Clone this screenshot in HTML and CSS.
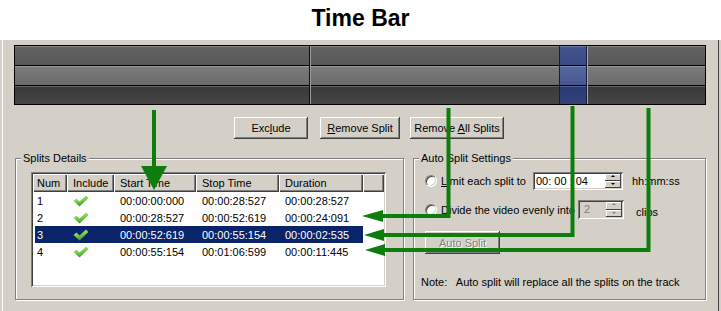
FILE: index.html
```html
<!DOCTYPE html>
<html>
<head>
<meta charset="utf-8">
<title>Time Bar</title>
<link rel="stylesheet" href="styles.css">
</head>
<body>
<div class="title">Time Bar</div>
<div class="dialog">
    <div class="timebar">
        <div class="seg seg-a"><div class="r1"></div><div class="r2"></div><div class="r3"></div></div>
        <div class="seg seg-b"><div class="r1"></div><div class="r2"></div><div class="r3"></div></div>
        <div class="seg seg-sel"><div class="r1"></div><div class="r2"></div><div class="r3"></div></div>
        <div class="seg seg-c"><div class="r1"></div><div class="r2"></div><div class="r3"></div></div>
    </div>
    <div class="actions">
        <button class="btn btn-exclude">Exc<u>l</u>ude</button>
        <button class="btn btn-remove"><u>R</u>emove Split</button>
        <button class="btn btn-removeall">Remove <u>A</u>ll Splits</button>
    </div>
    <div class="groups">
        <fieldset class="group splits">
            <legend>Splits Details</legend>
            <div class="listview">
                <table class="grid">
                    <colgroup><col style="width:34px"><col style="width:47px"><col style="width:82px"><col style="width:83px"><col style="width:84px"><col style="width:21px"></colgroup>
                    <tr><th class="c-num">Num</th><th>Include</th><th>Start Time</th><th>Stop Time</th><th>Duration</th><th></th></tr>
                    <tr><td class="c-num">1</td><td><svg class="chk" width="16" height="12" viewBox="0 0 16 12"><defs><linearGradient id="chkfill" x1="0" y1="0" x2="0.4" y2="1"><stop offset="0" stop-color="#c4f59c"/><stop offset="0.5" stop-color="#7ed456"/><stop offset="1" stop-color="#3e9b1f"/></linearGradient></defs><polygon points="0.5,6 3.5,3.5 6.5,6.5 13,0.5 15.5,3 6.5,11.5" fill="url(#chkfill)"/></svg></td><td>00:00:00:000</td><td>00:00:28:527</td><td>00:00:28:527</td><td></td></tr>
                    <tr><td class="c-num">2</td><td><svg class="chk" width="16" height="12" viewBox="0 0 16 12"><polygon points="0.5,6 3.5,3.5 6.5,6.5 13,0.5 15.5,3 6.5,11.5" fill="url(#chkfill)"/></svg></td><td>00:00:28:527</td><td>00:00:52:619</td><td>00:00:24:091</td><td></td></tr>
                    <tr class="sel"><td class="c-num">3</td><td><svg class="chk" width="16" height="12" viewBox="0 0 16 12"><polygon points="0.5,6 3.5,3.5 6.5,6.5 13,0.5 15.5,3 6.5,11.5" fill="url(#chkfill)"/></svg></td><td>00:00:52:619</td><td>00:00:55:154</td><td>00:00:02:535</td><td class="filler"></td></tr>
                    <tr><td class="c-num">4</td><td><svg class="chk" width="16" height="12" viewBox="0 0 16 12"><polygon points="0.5,6 3.5,3.5 6.5,6.5 13,0.5 15.5,3 6.5,11.5" fill="url(#chkfill)"/></svg></td><td>00:00:55:154</td><td>00:01:06:599</td><td>00:00:11:445</td><td></td></tr>
                </table>
            </div>
        </fieldset>
        <fieldset class="group auto">
            <legend>Auto Split Settings</legend>
            <div class="opt opt-limit">
                <span class="radio"></span>
                <span class="opt-label"><u>L</u>imit each split to</span>
                <div class="spin spin-time"><span class="spin-val">00: 00 : 04</span><span class="spin-btns"><span class="sb up"></span><span class="sb down"></span></span></div>
                <span class="unit">hh:mm:ss</span>
            </div>
            <div class="opt opt-divide">
                <span class="radio"></span>
                <span class="opt-label"><u>D</u>ivide the video evenly into</span>
                <div class="spin spin-clips off"><span class="spin-val">2</span><span class="spin-btns"><span class="sb up"></span><span class="sb down"></span></span></div>
                <span class="unit unit-clips">clips</span>
            </div>
            <button class="btn btn-auto" disabled><u>A</u>uto Split</button>
            <div class="note">Note:&nbsp;&nbsp; Auto split will replace all the splits on the track</div>
        </fieldset>
    </div>
</div>
<svg class="arrows" width="721" height="311" viewBox="0 0 721 311">
    <g fill="none" stroke="#0d7d0d" stroke-width="4">
        <path d="M154 110V168"/>
        <path d="M448.5 108V216H380"/>
        <path d="M572.5 106V235H380"/>
        <path d="M648.5 108V250H380"/>
    </g>
    <g fill="#0d7d0d">
        <polygon points="141,166 167,166 154,190"/>
        <polygon points="362,216 383,210 383,222"/>
        <polygon points="364,235 384,229 384,241"/>
        <polygon points="365,250 385,244 385,256"/>
    </g>
</svg>
</body>
</html>
```
FILE: styles.css
```css
* {box-sizing:border-box;}
body {margin:0; width:721px; height:311px; position:relative; overflow:hidden; background:#fff; color:#000; font-family:"Liberation Sans", Arial, sans-serif; font-size:11px;}
u {text-decoration:underline; text-underline-offset:1px;}

.title {height:40px; line-height:37px; text-align:center; font-size:23px; font-weight:bold;}

.dialog {height:271px; padding:5px 15px 0 14px; background:#d4d0c8;
    box-shadow: inset 2px 0 #d4d0c8, inset -2px 0 #d4d0c8, inset 3px 0 #fff, inset -3px 0 #404040;}

/* time bar */
.timebar {display:flex; height:60px; border:1px solid #000;}
.seg {display:flex; flex-direction:column;}
.seg div {border-bottom:1px solid #000; box-shadow:inset 0 1px rgba(255,255,255,.22);}
.seg .r1 {height:20px; background:linear-gradient(#626262, #575757);}
.seg .r2 {height:20px; background:linear-gradient(#7c7c7c, #6a6a6a);}
.seg .r3 {height:18px; border-bottom:none; background:linear-gradient(#383838, #464646);}
.seg-a {flex:0 0 295px; border-right:1px solid #111;}
.seg-b {flex:0 0 249px; border-left:1px solid #9a9a9a;}
.seg-sel {flex:0 0 28px; border-left:1px solid #141c40; border-right:1px solid #141c40;}
.seg-sel .r1 {background:linear-gradient(#43558e, #3a4b84);}
.seg-sel .r2 {background:linear-gradient(#55679f, #475993);}
.seg-sel .r3 {background:linear-gradient(#2a3872, #33427c);}
.seg-c {flex:1; border-left:1px solid #a8a8a8;}

/* buttons */
.actions {display:flex; margin-top:12px; padding-left:220px;}
.btn {height:22px; padding:0; border:none; background:#d4d0c8; color:#000; font:inherit;
    box-shadow: inset -1px -1px #404040, inset 1px 1px #fff, inset -2px -2px #808080;}
.btn-exclude {width:74px;}
.btn-remove {width:80px; margin-left:12px;}
.btn-removeall {width:94px; margin-left:10px;}

/* group boxes */
.groups {display:flex; margin:13px 0 0 1px;}
.group {margin:0; padding:0; min-width:0; height:148px; border:1px solid #808080; box-shadow: inset 1px 1px #fff, 1px 1px #fff;}
.group legend {margin-left:5px; padding:0 2px; line-height:13px; background:#d4d0c8;}
.splits {width:389px;}
.auto {width:293px; margin-left:9px;}

/* list view */
.listview {width:355px; height:115px; margin:7px 0 0 15px; padding:2px; background:#fff;
    box-shadow: inset 1px 1px #808080, inset -1px -1px #fff, inset 2px 2px #404040, inset -2px -2px #d4d0c8;}
.grid {width:351px; table-layout:fixed; border-collapse:separate; border-spacing:0;}
.grid th, .grid td {padding:0 0 0 6px; text-align:left; font-weight:normal; white-space:nowrap; overflow:hidden;}
.grid th {height:18px; background:#d4d0c8; box-shadow: inset 1px 1px #fff, inset -1px -1px #404040, inset -2px -2px #808080;}
.grid td {height:17px;}
.grid .c-num {padding-left:4px;}
.grid .chk {display:block;}
.sel td {background:#0a246a; color:#fff;}
.sel td.c-num {box-shadow:inset 2px 0 #fff;}
.sel td.filler {background:#fff;}

/* auto split */
.opt {display:flex; align-items:center; margin-left:11px;}
.opt-limit {height:18px; margin-top:7px;}
.opt-divide {height:19px; margin-top:10px;}
.radio {width:12px; height:12px; margin-right:4px; border-radius:50%; background:#fff;
    border:1px solid; border-color:#808080 #fff #fff #808080; box-shadow: inset 1px 1px #404040, inset -1px -1px #d4d0c8;}
.opt-limit .opt-label {width:92px;}
.opt-divide .opt-label {width:137px; white-space:nowrap; overflow:hidden;}
.spin {display:flex; height:100%; padding:2px; background:#fff;
    box-shadow: inset 1px 1px #808080, inset -1px -1px #fff, inset 2px 2px #404040, inset -2px -2px #d4d0c8;}
.spin-time {width:90px;}
.spin-clips {width:46px;}
.spin-val {flex:1; padding-left:1px; line-height:14px;}
.spin-btns {display:flex; flex-direction:column; width:16px;}
.sb {flex:1; position:relative; background:#d4d0c8; box-shadow: inset -1px -1px #404040, inset 1px 1px #fff;}
.sb::after {content:""; position:absolute; left:6px; border:2px solid transparent; border-left-width:2px; border-right-width:2px;}
.up::after {top:1px; border-bottom:2px solid #000; border-top:0;}
.down::after {top:2px; border-top:2px solid #000; border-bottom:0;}
.off {background:#d4d0c8; color:#808080;}
.off .up::after {border-bottom-color:#808080;}
.off .down::after {border-top-color:#808080;}
.spin-clips .spin-val {padding-left:4px;}
.unit {margin-left:9px;}
.unit-clips {margin-left:12px; padding-top:4px;}

.btn-auto {display:block; width:75px; height:23px; margin:12px 0 0 11px; color:#808080; text-shadow:1px 1px #fff;}
.note {margin:22px 0 0 7px; line-height:13px; white-space:nowrap;}

/* green guide arrows over the dialog */
.arrows {position:absolute; left:0; top:0; pointer-events:none;}
```
